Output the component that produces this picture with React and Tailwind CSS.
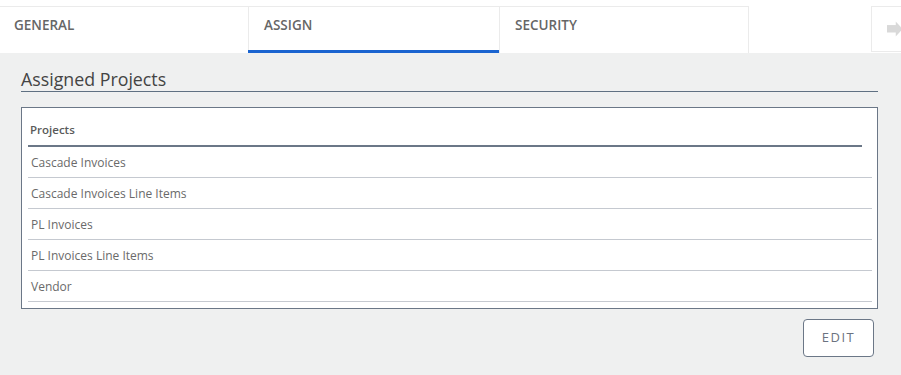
import React from "react";

const rows = [
  "Cascade Invoices",
  "Cascade Invoices Line Items",
  "PL Invoices",
  "PL Invoices Line Items",
  "Vendor",
];

export default function App() {
  return (
    <div className="w-[901px] h-[375px] overflow-hidden bg-white font-['Open_Sans',sans-serif]">
      {/* Tab bar */}
      <div className="flex h-[53px] pt-[6px] bg-white">
        <div className="w-[249px] h-[47px] border-t border-r border-[#ebebeb] pl-[14px] pt-[8px] text-[13.5px] font-semibold text-[#666]">
          GENERAL
        </div>
        <div className="relative w-[251px] h-[47px] border-t border-r border-[#ebebeb] pl-[15px] pt-[8px] text-[13.5px] font-semibold text-[#666]">
          ASSIGN
          <div className="absolute left-[-1px] right-0 bottom-0 h-[3px] bg-[#1a64d0]" />
        </div>
        <div className="w-[249px] h-[47px] border-t border-r border-[#ebebeb] pl-[15px] pt-[8px] text-[13.5px] font-semibold text-[#666]">
          SECURITY
        </div>
        <div className="ml-auto w-[30px] h-[46px] border border-r-0 border-[#ebebeb] flex items-center pl-[15px]">
          <svg width="16" height="18" viewBox="0 0 16 18" className="block">
            <rect x="0" y="4.5" width="11" height="8.5" fill="#d9d9d9" />
            <polygon points="10,0.5 18,9 10,17.5" fill="#d9d9d9" />
          </svg>
        </div>
      </div>

      {/* Panel */}
      <div className="h-[322px] bg-[#eff0f0] pl-[21px] pr-[23px] pt-[15px]">
        <div className="h-[24px] border-b border-[#5f7082] text-[17.8px] leading-[23px] text-[#444]">
          Assigned Projects
        </div>

        <div className="mt-[15px] h-[202px] border border-[#6b7787] bg-white pl-[6px] pr-[5px] pb-[6px]">
          <div className="mr-[10px] h-[39px] border-b-2 border-[#6b7787] pl-[2px] pt-[13px] text-[11.5px] font-semibold text-[#5a5a5a]">
            Projects
          </div>
          {rows.map((r) => (
            <div
              key={r}
              className="h-[31px] border-b border-[#c5c9d0] pl-[3px] pt-[2px] flex items-center text-[12px] text-[#6a6a6a]"
            >
              {r}
            </div>
          ))}
        </div>

        <div className="flex justify-end pr-[4px] mt-[10px]">
          <button className="w-[71px] h-[38px] rounded-[4px] border border-[#6b7787] bg-white text-[13px] tracking-[1.5px] text-[#6b7280]">
            EDIT
          </button>
        </div>
      </div>
    </div>
  );
}
